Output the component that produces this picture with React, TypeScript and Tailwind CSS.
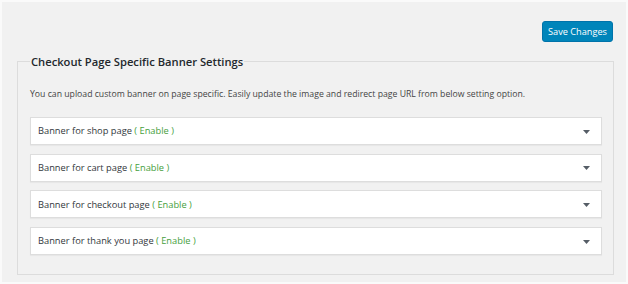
import React from "react"

const banners = [
  "Banner for shop page",
  "Banner for cart page",
  "Banner for checkout page",
  "Banner for thank you page",
]

function BannerRow({ label }: { label: string }) {
  return (
    <div className="flex h-[28px] items-center justify-between border border-[#dddddd] bg-white pl-[7px] pr-[11px] shadow-[0_1px_1px_rgba(0,0,0,0.04)]">
      <span className="text-[9.3px] leading-none text-[#32373c]">
        {label} <span className="text-[#46a03c]">( Enable )</span>
      </span>
      <svg width="7" height="4" viewBox="0 0 7 4" className="mt-[1px]">
        <path d="M0 0h7L3.5 4z" fill="#555d66" />
      </svg>
    </div>
  )
}

export default function App() {
  return (
    <div className="box-border h-[284px] w-[628px] border-2 border-[#fafafa] bg-[#f1f1f1] font-['Open_Sans',sans-serif]">
      <div className="flex justify-end pr-[13px] pt-[19px]">
        <button className="h-[21px] w-[71px] rounded-[3px] border border-[#0073aa] bg-[#0085ba] text-[9.2px] leading-none text-white">
          Save Changes
        </button>
      </div>

      <fieldset className="ml-[15px] mr-[12px] mt-[11px] border border-[#dcdcdc] px-[12px] pb-[19px] pr-[11px]">
        <legend className="px-[1px] text-[11.2px] font-semibold leading-[17px] text-[#23282d]">
          Checkout Page Specific Banner Settings
        </legend>
        <p className="mt-[18px] text-[8.7px] leading-[12px] text-[#444444]">
          You can upload custom banner on page specific. Easily update the image and redirect page URL from below setting option.
        </p>
        <div className="mt-[17px] flex flex-col gap-[8.7px]">
          {banners.map((b) => (
            <BannerRow key={b} label={b} />
          ))}
        </div>
      </fieldset>
    </div>
  )
}
